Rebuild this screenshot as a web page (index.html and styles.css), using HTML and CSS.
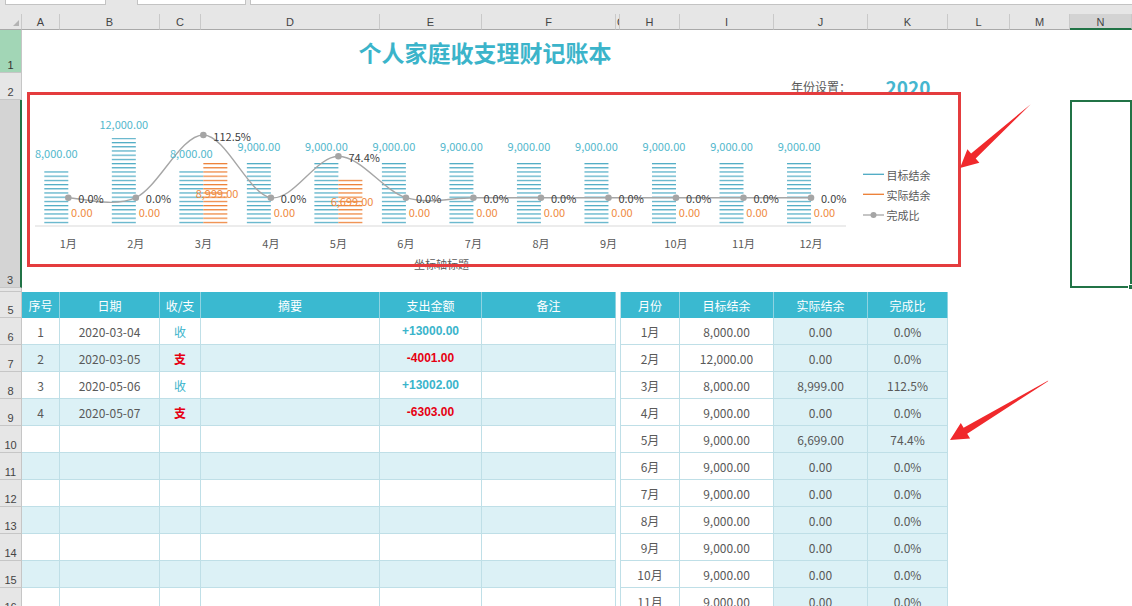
FILE: index.html
```html
<!DOCTYPE html>
<html lang="zh-CN">
<head>
<meta charset="utf-8">
<title>个人家庭收支理财记账本</title>
<link rel="stylesheet" href="styles.css">
</head>
<body>
<div class="app">
  <div class="toolbar">
    <div class="tb-box tb-name"></div>
    <div class="tb-box tb-btn"></div>
    <div class="tb-box tb-formula"></div>
  </div>
  <div class="colheads">
    <div class="ch corner"></div>
    <div class="ch">A</div><div class="ch">B</div><div class="ch">C</div><div class="ch">D</div><div class="ch">E</div><div class="ch">F</div><div class="ch ch-g">G</div><div class="ch">H</div><div class="ch">I</div><div class="ch">J</div><div class="ch">K</div><div class="ch">L</div><div class="ch">M</div><div class="ch ch-sel">N</div>
  </div>
  <div class="sheet">
    <div class="rowheads">
      <div class="rh rh-r1">1</div>
      <div class="rh">2</div>
      <div class="rh rh-r3">3</div>
      <div class="rh rh-r4"></div>
      <div class="rh rh-r5">5</div>
      <div class="rh">6</div>
      <div class="rh">7</div>
      <div class="rh">8</div>
      <div class="rh">9</div>
      <div class="rh">10</div>
      <div class="rh">11</div>
      <div class="rh">12</div>
      <div class="rh">13</div>
      <div class="rh">14</div>
      <div class="rh">15</div>
      <div class="rh">16</div>
    </div>
    <div class="cells">
      <div class="top">
        <h1 class="title">个人家庭收支理财记账本</h1>
        <div class="year-label">年份设置：</div>
        <div class="year-value">2020</div>
        <div class="selection"><span class="handle"></span></div>
        <div class="chart">
          <svg class="chart-svg" viewBox="27 92 934 175" xmlns="http://www.w3.org/2000/svg">
            <defs>
              <pattern id="stripeT" patternUnits="userSpaceOnUse" x="0" y="221.8" width="10" height="4.2">
                <rect x="0" y="0" width="10" height="1.2" fill="#4aa9c3"/>
              </pattern>
              <pattern id="stripeA" patternUnits="userSpaceOnUse" x="0" y="221.8" width="10" height="4.2">
                <rect x="0" y="0" width="10" height="1.2" fill="#ec7c30"/>
              </pattern>
            </defs>
            <line class="axis" x1="35" y1="226" x2="846" y2="226"/>
            <g fill="url(#stripeT)">
              <rect x="44.3" y="170.4" width="24" height="54.6"/>
              <rect x="111.82" y="138" width="24" height="87"/>
              <rect x="179.34" y="170.4" width="24" height="54.6"/>
              <rect x="246.86" y="162.3" width="24" height="62.7"/>
              <rect x="314.38" y="162.3" width="24" height="62.7"/>
              <rect x="381.9" y="162.3" width="24" height="62.7"/>
              <rect x="449.42" y="162.3" width="24" height="62.7"/>
              <rect x="516.94" y="162.3" width="24" height="62.7"/>
              <rect x="584.46" y="162.3" width="24" height="62.7"/>
              <rect x="651.98" y="162.3" width="24" height="62.7"/>
              <rect x="719.5" y="162.3" width="24" height="62.7"/>
              <rect x="787.02" y="162.3" width="24" height="62.7"/>
            </g>
            <g fill="url(#stripeA)">
              <rect x="203.34" y="162.3" width="24" height="62.7"/>
              <rect x="338.38" y="179" width="24" height="46"/>
            </g>
            <path class="curve" d="M68.3 197.7 C79.55 197.7 113.31 208.15 135.82 197.7 C158.33 187.25 180.83 135 203.34 135 C225.85 135 248.35 194.16 270.86 197.7 C293.37 201.24 315.87 156.26 338.38 156.26 C360.89 156.26 383.39 190.79 405.9 197.7 C428.41 204.61 450.91 197.7 473.42 197.7 L811.02 197.7"/>
            <g class="markers">
              <circle cx="68.3" cy="197.7" r="3.3"/>
              <circle cx="135.82" cy="197.7" r="3.3"/>
              <circle cx="203.34" cy="135" r="3.3"/>
              <circle cx="270.86" cy="197.7" r="3.3"/>
              <circle cx="338.38" cy="156.26" r="3.3"/>
              <circle cx="405.9" cy="197.7" r="3.3"/>
              <circle cx="473.42" cy="197.7" r="3.3"/>
              <circle cx="540.94" cy="197.7" r="3.3"/>
              <circle cx="608.46" cy="197.7" r="3.3"/>
              <circle cx="675.98" cy="197.7" r="3.3"/>
              <circle cx="743.5" cy="197.7" r="3.3"/>
              <circle cx="811.02" cy="197.7" r="3.3"/>
            </g>
            <g class="lbl lbl-t">
              <text x="56.3" y="153">8,000.00</text>
              <text x="123.82" y="123.5">12,000.00</text>
              <text x="191.34" y="153">8,000.00</text>
              <text x="258.86" y="146">9,000.00</text>
              <text x="326.38" y="146">9,000.00</text>
              <text x="393.9" y="146">9,000.00</text>
              <text x="461.42" y="146">9,000.00</text>
              <text x="528.94" y="146">9,000.00</text>
              <text x="596.46" y="146">9,000.00</text>
              <text x="663.98" y="146">9,000.00</text>
              <text x="731.5" y="146">9,000.00</text>
              <text x="799.02" y="146">9,000.00</text>
            </g>
            <g class="lbl lbl-a">
              <text x="81.8" y="212">0.00</text>
              <text x="149.32" y="212">0.00</text>
              <text x="217" y="193">8,999.00</text>
              <text x="284.36" y="212">0.00</text>
              <text x="352" y="201">6,699.00</text>
              <text x="419.4" y="212">0.00</text>
              <text x="486.92" y="212">0.00</text>
              <text x="554.44" y="212">0.00</text>
              <text x="621.96" y="212">0.00</text>
              <text x="689.48" y="212">0.00</text>
              <text x="757" y="212">0.00</text>
              <text x="824.52" y="212">0.00</text>
            </g>
            <g class="lbl lbl-p">
              <text x="78.3" y="198.2">0.0%</text>
              <text x="145.82" y="198.2">0.0%</text>
              <text x="213.34" y="136">112.5%</text>
              <text x="280.86" y="198.2">0.0%</text>
              <text x="348.38" y="157">74.4%</text>
              <text x="415.9" y="198.2">0.0%</text>
              <text x="483.42" y="198.2">0.0%</text>
              <text x="550.94" y="198.2">0.0%</text>
              <text x="618.46" y="198.2">0.0%</text>
              <text x="685.98" y="198.2">0.0%</text>
              <text x="753.5" y="198.2">0.0%</text>
              <text x="821.02" y="198.2">0.0%</text>
            </g>
            <g class="lbl lbl-m">
              <text x="68.3" y="242.5">1月</text>
              <text x="135.82" y="242.5">2月</text>
              <text x="203.34" y="242.5">3月</text>
              <text x="270.86" y="242.5">4月</text>
              <text x="338.38" y="242.5">5月</text>
              <text x="405.9" y="242.5">6月</text>
              <text x="473.42" y="242.5">7月</text>
              <text x="540.94" y="242.5">8月</text>
              <text x="608.46" y="242.5">9月</text>
              <text x="675.98" y="242.5">10月</text>
              <text x="743.5" y="242.5">11月</text>
              <text x="811.02" y="242.5">12月</text>
            </g>
            <text class="lbl lbl-m" x="441.5" y="263.5">坐标轴标题</text>
            <g class="legend">
              <line class="lg-t" x1="863" y1="174.3" x2="884" y2="174.3"/>
              <text class="lbl lbl-l" x="886.5" y="174.5">目标结余</text>
              <line class="lg-a" x1="863" y1="194.3" x2="884" y2="194.3"/>
              <text class="lbl lbl-l" x="886.5" y="194.5">实际结余</text>
              <line class="lg-p" x1="863" y1="215" x2="884" y2="215"/>
              <circle class="lg-dot" cx="873.5" cy="215" r="3"/>
              <text class="lbl lbl-l" x="886.5" y="215">完成比</text>
            </g>
          </svg>
        </div>
      </div>
      <div class="tables">
        <div class="ledger">
          <div class="row">
            <div class="c hd">序号</div><div class="c hd">日期</div><div class="c hd">收/支</div><div class="c hd">摘要</div><div class="c hd">支出金额</div><div class="c hd">备注</div>
          </div>
          <div class="row">
            <div class="c">1</div><div class="c">2020-03-04</div><div class="c in">收</div><div class="c"></div><div class="c amt pos">+13000.00</div><div class="c"></div>
          </div>
          <div class="row alt">
            <div class="c">2</div><div class="c">2020-03-05</div><div class="c out">支</div><div class="c"></div><div class="c amt neg">-4001.00</div><div class="c"></div>
          </div>
          <div class="row">
            <div class="c">3</div><div class="c">2020-05-06</div><div class="c in">收</div><div class="c"></div><div class="c amt pos">+13002.00</div><div class="c"></div>
          </div>
          <div class="row alt">
            <div class="c">4</div><div class="c">2020-05-07</div><div class="c out">支</div><div class="c"></div><div class="c amt neg">-6303.00</div><div class="c"></div>
          </div>
          <div class="row"><div class="c"></div><div class="c"></div><div class="c"></div><div class="c"></div><div class="c"></div><div class="c"></div></div>
          <div class="row alt"><div class="c"></div><div class="c"></div><div class="c"></div><div class="c"></div><div class="c"></div><div class="c"></div></div>
          <div class="row"><div class="c"></div><div class="c"></div><div class="c"></div><div class="c"></div><div class="c"></div><div class="c"></div></div>
          <div class="row alt"><div class="c"></div><div class="c"></div><div class="c"></div><div class="c"></div><div class="c"></div><div class="c"></div></div>
          <div class="row"><div class="c"></div><div class="c"></div><div class="c"></div><div class="c"></div><div class="c"></div><div class="c"></div></div>
          <div class="row alt"><div class="c"></div><div class="c"></div><div class="c"></div><div class="c"></div><div class="c"></div><div class="c"></div></div>
          <div class="row"><div class="c"></div><div class="c"></div><div class="c"></div><div class="c"></div><div class="c"></div><div class="c"></div></div>
        </div>
        <div class="gapcol"></div>
        <div class="summary">
          <div class="row"><div class="c hd">月份</div><div class="c hd">目标结余</div><div class="c hd">实际结余</div><div class="c hd">完成比</div></div>
          <div class="row"><div class="c">1月</div><div class="c">8,000.00</div><div class="c tint">0.00</div><div class="c tint">0.0%</div></div>
          <div class="row"><div class="c">2月</div><div class="c">12,000.00</div><div class="c tint">0.00</div><div class="c tint">0.0%</div></div>
          <div class="row"><div class="c">3月</div><div class="c">8,000.00</div><div class="c tint">8,999.00</div><div class="c tint">112.5%</div></div>
          <div class="row"><div class="c">4月</div><div class="c">9,000.00</div><div class="c tint">0.00</div><div class="c tint">0.0%</div></div>
          <div class="row"><div class="c">5月</div><div class="c">9,000.00</div><div class="c tint">6,699.00</div><div class="c tint">74.4%</div></div>
          <div class="row"><div class="c">6月</div><div class="c">9,000.00</div><div class="c tint">0.00</div><div class="c tint">0.0%</div></div>
          <div class="row"><div class="c">7月</div><div class="c">9,000.00</div><div class="c tint">0.00</div><div class="c tint">0.0%</div></div>
          <div class="row"><div class="c">8月</div><div class="c">9,000.00</div><div class="c tint">0.00</div><div class="c tint">0.0%</div></div>
          <div class="row"><div class="c">9月</div><div class="c">9,000.00</div><div class="c tint">0.00</div><div class="c tint">0.0%</div></div>
          <div class="row"><div class="c">10月</div><div class="c">9,000.00</div><div class="c tint">0.00</div><div class="c tint">0.0%</div></div>
          <div class="row"><div class="c">11月</div><div class="c">9,000.00</div><div class="c tint">0.00</div><div class="c tint">0.0%</div></div>
          <div class="row"><div class="c">12月</div><div class="c">9,000.00</div><div class="c tint">0.00</div><div class="c tint">0.0%</div></div>
        </div>
      </div>
    </div>
  </div>
  <svg class="arrows" viewBox="0 0 1132 606" xmlns="http://www.w3.org/2000/svg">
    <polygon points="1031.3,103.7 1030.7,104.3 975.7,158.6 979.4,162.7 960,168 967.4,149.3 971.1,153.4"/>
    <polygon points="1048.3,380.6 1047.7,381.4 967.2,433.7 970.1,438.4 950,440 960.8,423 963.6,427.7"/>
  </svg>
</div>
</body>
</html>
```

FILE: styles.css
```css
* {
  box-sizing: border-box;
  margin: 0;
  padding: 0;
}

html, body {
  width: 1132px;
  height: 606px;
  overflow: hidden;
  background: #fff;
}

body {
  font-family: "Noto Sans CJK SC", "Noto Sans", sans-serif;
  color: #595959;
}

.app {
  position: relative;
  width: 1132px;
  height: 606px;
  overflow: hidden;
}

/* formula bar remnants */
.toolbar {
  height: 14px;
  background: #e6e6e6;
  display: flex;
  align-items: flex-start;
  padding-left: 5px;
}

.tb-box {
  height: 5px;
  background: #fff;
  border: 1px solid #c3c3c3;
  border-top: 0;
}

.tb-name { width: 101px; }
.tb-btn { width: 109px; margin-left: 31px; }
.tb-formula { flex: 1; margin-left: 4px; margin-right: -2px; }

/* column headers */
.colheads {
  display: grid;
  grid-template-columns: 22px 38px 100px 41px 179px 102px 134px 4px 60px 94px 94px 80px 62px 60px 62px;
  height: 16px;
  background: #e6e6e6;
}

.ch {
  border-right: 1px solid #c9c9c9;
  border-bottom: 1px solid #a9a9a9;
  font-family: "Liberation Sans", Arial, sans-serif;
  font-size: 11px;
  line-height: 13px;
  padding-top: 2px;
  text-align: center;
  color: #444;
  overflow: hidden;
}

.corner {
  position: relative;
}

.corner::after {
  content: "";
  position: absolute;
  right: 2px;
  bottom: 3px;
  border-left: 6px solid transparent;
  border-bottom: 6px solid #b3b3b3;
}

.ch-g {
  text-align: left;
  padding-left: 1px;
}

.ch-sel {
  background: #d3d3d3;
  border-bottom: 2px solid #217346;
}

/* sheet body */
.sheet {
  display: flex;
}

.rowheads {
  width: 22px;
  flex: none;
  display: flex;
  flex-direction: column;
}

.rh {
  flex: none;
  height: 27px;
  background: #e6e6e6;
  border-right: 1px solid #c6c6c6;
  border-bottom: 1px solid #c6c6c6;
  display: flex;
  align-items: flex-end;
  justify-content: center;
  font-family: "Liberation Sans", Arial, sans-serif;
  font-size: 11px;
  line-height: 12px;
  padding-bottom: 1px;
  color: #444;
}

.rh-r1 {
  height: 43px;
  background: #a2d6b6;
  color: #333;
}

.rh-r3 {
  height: 188px;
  background: #d4d4d4;
  border-right: 2px solid #217346;
}

.rh-r4 {
  height: 4px;
  padding: 0;
}

.rh-r5 {
  height: 26px;
}

.cells {
  width: 1110px;
  flex: none;
}

/* top region: title, year, chart */
.top {
  position: relative;
  display: grid;
  grid-template-columns: 38px 100px 41px 179px 102px 134px 4px 60px 94px 94px 80px 62px 60px 62px;
  grid-template-rows: 43px 27px 188px 4px;
}

.title {
  grid-column: 1 / 12;
  grid-row: 1;
  align-self: center;
  text-align: center;
  font-size: 23px;
  font-weight: 700;
  line-height: 30px;
  color: #3bb4ca;
}

.year-label {
  grid-column: 10;
  grid-row: 2;
  align-self: center;
  justify-self: center;
  font-size: 12px;
  line-height: 16px;
  color: #595959;
}

.year-value {
  grid-column: 11;
  grid-row: 2;
  align-self: center;
  justify-self: center;
  font-size: 19px;
  font-weight: 700;
  line-height: 22px;
  color: #45b6cf;
}

.selection {
  grid-column: 14;
  grid-row: 3;
  position: relative;
  border: 2px solid #217346;
}

.handle {
  position: absolute;
  right: -4px;
  bottom: -4px;
  width: 6px;
  height: 6px;
  background: #217346;
  border: 1px solid #fff;
}

/* chart (floating object over cells) */
.chart {
  position: absolute;
  left: 5px;
  top: 62px;
  width: 934px;
  height: 175px;
  background: #fff;
}

.chart::after {
  content: "";
  position: absolute;
  inset: 0;
  border: 3px solid #e43c3e;
  pointer-events: none;
}

.chart-svg {
  display: block;
  width: 934px;
  height: 175px;
  overflow: visible;
}

.axis {
  stroke: #d9d9d9;
  stroke-width: 1;
}

.curve {
  fill: none;
  stroke: #a6a6a6;
  stroke-width: 1.4;
}

.markers circle {
  fill: #a5a5a5;
}

.lbl {
  font-family: "Noto Sans CJK SC", "Noto Sans", sans-serif;
  font-size: 11px;
  dominant-baseline: central;
}

.lbl-t text,
.lbl-a text,
.lbl-m text,
.lbl-m {
  text-anchor: middle;
}

.lbl-t { fill: #52b7cc; }
.lbl-a { fill: #ef8a3e; }
.lbl-p { fill: #404040; }
.lbl-m { fill: #595959; }
.lbl-l { fill: #595959; }

.lg-t { stroke: #4aa9c3; stroke-width: 1.3; }
.lg-a { stroke: #ec7c30; stroke-width: 1.3; }
.lg-p { stroke: #a6a6a6; stroke-width: 1.3; }
.lg-dot { fill: #a5a5a5; }

/* tables */
.tables {
  display: flex;
  align-items: flex-start;
}

.ledger {
  display: grid;
  grid-template-columns: 38px 100px 41px 179px 102px 134px;
  flex: none;
}

.gapcol {
  width: 4px;
  flex: none;
}

.summary {
  display: grid;
  grid-template-columns: 59px 94px 94px 80px;
  border-left: 1px solid #bfdfe7;
  flex: none;
}

.row {
  display: contents;
}

.c {
  height: 27px;
  display: flex;
  align-items: center;
  justify-content: center;
  font-size: 12px;
  color: #595959;
  white-space: nowrap;
  border-right: 1px solid #bfdfe7;
  border-bottom: 1px solid #bfdfe7;
  background: #fff;
}

.c.hd {
  height: 26px;
  background: #3ab9d0;
  color: #fff;
  border-right: 1px solid #8fd3e1;
  border-bottom: 0;
}

.row.alt .c {
  background: #dcf1f6;
}

.c.tint {
  background: #dcf1f6;
}

.in {
  color: #3ab4cb;
}

.out {
  color: #e60012;
  font-weight: 700;
}

.amt {
  font-family: "Liberation Sans", Arial, sans-serif;
  font-weight: 700;
}

.amt.pos { color: #3ab4cb; }
.amt.neg { color: #e60012; }

/* annotation arrows overlay */
.arrows {
  position: absolute;
  left: 0;
  top: 0;
  width: 1132px;
  height: 606px;
  pointer-events: none;
}

.arrows polygon {
  fill: #f0292c;
}
```
